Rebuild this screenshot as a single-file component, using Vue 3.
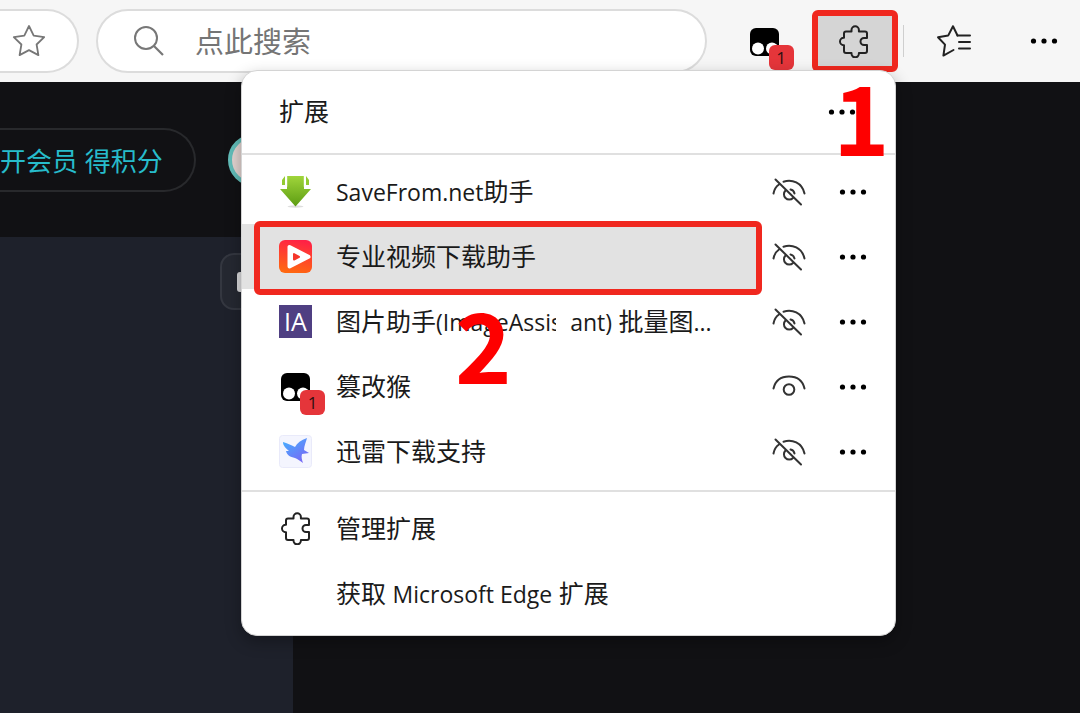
<script setup>
import { h } from 'vue'

const latin = /([A-Za-z.()]+(?: [A-Za-z.()]+)*)/

const Label = ({ text }) =>
  h(
    'span',
    { class: 'label' },
    text.split(latin).filter(Boolean).map((part) =>
      latin.test(part) ? h('span', { class: 'latin' }, part) : part
    )
  )
Label.props = ['text']

const Dots = () =>
  h('svg', { class: 'dots', width: 30, height: 10, viewBox: '0 0 30 10', 'aria-hidden': 'true' }, [
    h('circle', { cx: 4.5, cy: 5, r: 2.6 }),
    h('circle', { cx: 15, cy: 5, r: 2.6 }),
    h('circle', { cx: 25.5, cy: 5, r: 2.6 }),
  ])

const Puzzle = () =>
  h('svg', { width: 33, height: 33, viewBox: '0 0 33 33', 'aria-hidden': 'true' }, [
    h('path', {
      fill: 'none',
      stroke: '#222',
      'stroke-width': 2,
      'stroke-linejoin': 'round',
      d: 'M7 8.500a2 2 0 0 1 2-2h5.500V5a3.700 3.700 0 0 1 7.400 0v1.500H28a2 2 0 0 1 2 2V13h-3a3.500 3.500 0 0 0 0 7h3v6a2 2 0 0 1-2 2h-6.100v.6a3.700 3.700 0 0 1-7.400 0V28H9a2 2 0 0 1-2-2v-5.800h-.3a3.700 3.700 0 0 1 0-7.400H7z',
    }),
  ])

const Monkey = () =>
  h('span', { class: 'monkey' }, [
    h('svg', { width: 33, height: 33, viewBox: '0 0 33 33', 'aria-hidden': 'true' }, [
      h('rect', { x: 2, y: 3, width: 29, height: 28, rx: 6, fill: '#000' }),
      h('circle', { cx: 10, cy: 23.5, r: 6, fill: '#fff' }),
      h('circle', { cx: 24, cy: 23.5, r: 6, fill: '#fff' }),
    ]),
    h('span', { class: 'count' }, '1'),
  ])

const extensions = [
  { id: 'savefrom', name: 'SaveFrom.net助手', visible: false },
  { id: 'video', name: '专业视频下载助手', visible: false },
  { id: 'ia', name: '图片助手(ImageAssistant) 批量图...', visible: false },
  { id: 'monkey', name: '篡改猴', visible: true },
  { id: 'thunder', name: '迅雷下载支持', visible: false },
]
</script>

<template>
  <div class="browser">
    <header class="toolbar">
      <div class="address">
        <button class="icon-button" aria-label="收藏">
          <svg width="34" height="34" viewBox="0 0 34 34">
            <path d="M17 2l4.7 9.6 10.5 1.5-7.6 7.4 1.8 10.6L17 26.1l-9.4 5 1.8-10.6-7.6-7.4 10.5-1.5z" fill="none" stroke="#777" stroke-width="1.8" stroke-linejoin="round" />
          </svg>
        </button>
      </div>
      <div class="search">
        <svg width="32" height="32" viewBox="0 0 32 32" aria-hidden="true">
          <circle cx="13" cy="13" r="11" fill="none" stroke="#777" stroke-width="2" />
          <path d="M21 21l9 9" stroke="#777" stroke-width="2.2" />
        </svg>
        <input type="text" placeholder="点此搜索" aria-label="点此搜索" />
      </div>
      <button class="icon-button pinned" aria-label="篡改猴"><Monkey /></button>
      <button class="icon-button ext-toggle" aria-label="扩展"><Puzzle /></button>
      <span class="divider"></span>
      <button class="icon-button favorites" aria-label="收藏夹">
        <svg width="36" height="34" viewBox="0 0 36 34" fill="none" stroke="#222" stroke-width="2" stroke-linejoin="round" stroke-linecap="round">
          <path d="M21.500 11.500L17 2.200l-4.700 9.200L2 13.200l7 7.400-1.600 11L17.500 26" />
          <path d="M21.500 11.500h12.500M23 18h11M23 24.500h11" />
        </svg>
      </button>
      <button class="icon-button more" aria-label="更多"><Dots /></button>
    </header>

    <main class="page">
      <div class="top-strip">
        <a class="member" href="#">开会员 得积分</a>
        <span class="avatar"></span>
      </div>
      <section class="panel">
        <button class="panel-button" aria-label="面板"><span></span></button>
      </section>
    </main>

    <section class="popup" aria-label="扩展">
      <div class="popup-head">
        <h1>扩展</h1>
        <button class="square" aria-label="更多选项"><Dots /></button>
      </div>

      <ul class="list">
        <li v-for="item in extensions" :key="item.id" class="row">
          <button class="entry" :class="{ active: item.id === 'video' }">
            <svg v-if="item.id === 'savefrom'" width="33" height="33" viewBox="0 0 33 33" aria-hidden="true">
              <defs>
                <linearGradient id="green" x1="0" y1="0" x2="0" y2="1">
                  <stop offset="0" stop-color="#a0d53b" />
                  <stop offset="1" stop-color="#5c9c12" />
                </linearGradient>
              </defs>
              <ellipse cx="16.5" cy="31.5" rx="8" ry="1.2" fill="#ddd" />
              <path d="M8 1h17v13h7L16.500 31.500 1 14h7z" fill="url(#green)" />
              <path d="M3 5l3-4v9H3zM30 5l-3-4v9h3z" fill="#93cb32" />
              <path d="M7.500 1v10H3M25.500 1v10H30" fill="none" stroke="#fff" stroke-width="1.4" />
            </svg>
            <svg v-else-if="item.id === 'video'" width="33" height="33" viewBox="0 0 33 33" aria-hidden="true">
              <defs>
                <linearGradient id="flame" x1=".6" y1="0" x2=".4" y2="1">
                  <stop offset="0" stop-color="#ff2146" />
                  <stop offset="1" stop-color="#ff6810" />
                </linearGradient>
              </defs>
              <rect width="33" height="33" rx="6" fill="url(#flame)" />
              <path d="M10.500 7v19.500l19-9.700z" fill="#fff" stroke="#fff" stroke-width="4" stroke-linejoin="round" />
              <path d="M15 14v5.500l5-2.700z" fill="#f5372b" stroke="#f5372b" stroke-width="2" stroke-linejoin="round" />
            </svg>
            <span v-else-if="item.id === 'ia'" class="ia">IA</span>
            <Monkey v-else-if="item.id === 'monkey'" />
            <svg v-else width="33" height="33" viewBox="0 0 33 33" aria-hidden="true">
              <defs>
                <linearGradient id="bird" x1="0" y1="0" x2=".7" y2="1">
                  <stop offset="0" stop-color="#42b4ff" />
                  <stop offset="1" stop-color="#7868f5" />
                </linearGradient>
              </defs>
              <rect x=".5" y=".5" width="32" height="32" rx="3" fill="#f4f5fe" stroke="#e9eafa" />
              <path d="M4 7c4 1 8 3 12 5 2-4 6-7 12-9-1 4-3 8-3 12l5 3-7 1c-1 3 0 6 1 9-3-2-5-4-8-5-5-1-8-3-9-7l3 0C7 13 4 11 4 7z" fill="url(#bird)" />
            </svg>
            <Label :text="item.name" />
            <span v-if="item.id === 'ia'" class="smudge"></span>
          </button>
          <button class="square" :aria-label="item.visible ? '隐藏' : '显示'">
            <svg width="34" height="34" viewBox="0 0 34 34" fill="none" stroke="#333" stroke-width="2" stroke-linecap="round">
              <template v-if="item.visible">
                <path d="M1.500 18.500C3.500 10 9.500 6.500 17 6.500S30.500 10 32.500 18.500" />
                <circle cx="17" cy="19.500" r="5.300" />
              </template>
              <template v-else>
                <path d="M1.500 18.500c.7-4 2.600-7 5.500-9M11.500 6.700C20 4 30 7.500 32.500 18.500" />
                <path d="M13.500 15.500a5.300 5.300 0 1 0 7.500 7.500M18.500 14.500c2 .4 3.600 2 4 4" />
                <path d="M3.500 4.500l25.500 25" />
              </template>
            </svg>
          </button>
          <button class="square" aria-label="更多操作"><Dots /></button>
        </li>
      </ul>

      <div class="footer">
        <button class="entry"><Puzzle /><Label text="管理扩展" /></button>
        <button class="entry"><span class="blank"></span><Label text="获取 Microsoft Edge 扩展" /></button>
      </div>

      <span class="frame-entry"></span>
      <span class="step step-one">1</span>
      <span class="step step-two">2</span>
    </section>
  </div>
</template>

<style>
body {
  margin: 0;
  background: #111114;
}
</style>

<style scoped>
.browser {
  position: relative;
  display: flex;
  flex-direction: column;
  min-height: 100vh;
  overflow: hidden;
  font-family: "Open Sans", "Noto Sans CJK SC", sans-serif;
  font-size: 25px;
  color: #1a1a1a;
  background: #111114;
}

button {
  display: flex;
  align-items: center;
  padding: 0;
  border: 0;
  background: none;
  font: inherit;
  color: inherit;
}

.toolbar {
  display: flex;
  align-items: center;
  box-sizing: border-box;
  height: 82px;
  padding-right: 18px;
  background: #f6f6f6;
}

.address,
.search {
  display: flex;
  align-items: center;
  box-sizing: border-box;
  height: 64px;
  border: 2px solid #dcdcdc;
  background: #fff;
}

.address {
  width: 79px;
  justify-content: flex-end;
  padding-right: 31px;
  border-left: 0;
  border-radius: 0 32px 32px 0;
}

.search {
  flex: 1;
  gap: 30px;
  margin-left: 17px;
  padding: 0 35px;
  border-radius: 32px;
}

.search input {
  flex: 1;
  min-width: 0;
  padding: 0;
  border: 0;
  outline: 0;
  background: none;
  font: inherit;
  font-size: 29px;
}

.search input::placeholder {
  color: #757575;
  opacity: 1;
}

.icon-button {
  flex: none;
  justify-content: center;
}

.pinned {
  width: 34px;
  margin-left: 40px;
}

.ext-toggle {
  box-sizing: border-box;
  width: 86px;
  height: 62px;
  margin-left: 31px;
  padding-right: 4px;
  border: 6px solid #f0281f;
  border-radius: 6px;
  background: #d5d5d5;
}

.divider {
  width: 1px;
  height: 32px;
  margin-left: 5px;
  background: #cfcfcf;
}

.favorites {
  width: 36px;
  margin-left: 32px;
}

.more {
  width: 36px;
  margin-left: 54px;
}

.page {
  display: flex;
  flex: 1;
  flex-direction: column;
}

.top-strip {
  display: flex;
  align-items: center;
  gap: 32px;
  height: 155px;
}

.member {
  box-sizing: border-box;
  width: 196px;
  height: 64px;
  border: 2px solid #28292c;
  border-left: 0;
  border-radius: 0 32px 32px 0;
  font-size: 26px;
  line-height: 62px;
  white-space: nowrap;
  text-decoration: none;
  color: #27bccb;
}

.avatar {
  box-sizing: border-box;
  width: 52px;
  height: 52px;
  border: 4px solid #62bdb9;
  border-radius: 50%;
  background: #e2d3d0;
}

.panel {
  display: flex;
  flex: 1;
  align-items: flex-start;
  justify-content: flex-end;
  box-sizing: border-box;
  width: 293px;
  padding: 16px;
  background: #1e212b;
}

.panel-button {
  box-sizing: border-box;
  width: 57px;
  height: 57px;
  padding-left: 15px;
  border: 2px solid #343740;
  border-radius: 14px;
  background: #252831;
}

.panel-button span {
  width: 24px;
  height: 20px;
  border-radius: 3px;
  background: #d8d8da;
}

.popup {
  position: absolute;
  top: 70px;
  right: 184px;
  box-sizing: border-box;
  width: 655px;
  border: 1px solid #d4d4d4;
  border-radius: 16px;
  background: #fff;
  box-shadow: 0 6px 16px rgba(0, 0, 0, 0.3);
}

.popup-head {
  display: flex;
  align-items: center;
  justify-content: space-between;
  height: 82px;
  padding: 0 21px 0 37px;
  border-bottom: 2px solid #e0e0e0;
}

h1 {
  margin: 0;
  padding-bottom: 4px;
  font-size: 25px;
  font-weight: 400;
}

.list {
  margin: 0;
  padding: 4px 10px 6px 0;
  border-bottom: 2px solid #e0e0e0;
  list-style: none;
}

.row {
  display: flex;
  height: 65px;
}

.entry {
  position: relative;
  flex: 1;
  gap: 24px;
  height: 65px;
  padding-left: 37px;
  text-align: left;
  white-space: nowrap;
}

.entry.active {
  background: #e2e2e2;
}

.entry :deep(.label) {
  padding-bottom: 4px;
}

.entry :deep(.latin) {
  font-size: 23px;
}

.square {
  flex: none;
  justify-content: center;
  width: 64px;
}

.ia {
  width: 33px;
  height: 33px;
  background: #4f3f82;
  line-height: 33px;
  text-align: center;
  color: #fff;
}

.monkey {
  position: relative;
  display: flex;
  width: 33px;
  height: 33px;
}

.monkey :deep(.count),
.count {
  position: absolute;
  top: 20px;
  left: 21px;
  width: 25px;
  height: 25px;
  border-radius: 6px;
  background: #e5353a;
  font-size: 17px;
  line-height: 25px;
  text-align: center;
  color: #301010;
}

.smudge {
  position: absolute;
  top: 14px;
  left: 314px;
  width: 14px;
  height: 34px;
  background: #fff;
}

.blank {
  width: 33px;
}

.footer {
  padding: 4px 0 9px;
}

.footer .entry {
  width: 100%;
}

.frame-entry {
  position: absolute;
  top: 150px;
  left: 12px;
  box-sizing: border-box;
  width: 508px;
  height: 74px;
  border: 6px solid #f0281f;
  border-radius: 6px;
}

.step {
  position: absolute;
  font-family: "Noto Sans CJK SC", sans-serif;
  font-size: 96px;
  font-weight: 700;
  line-height: 96px;
  color: #fe0000;
}

.step-one {
  top: -4px;
  left: 591px;
}

.step-two {
  top: 224px;
  left: 213px;
}
</style>
